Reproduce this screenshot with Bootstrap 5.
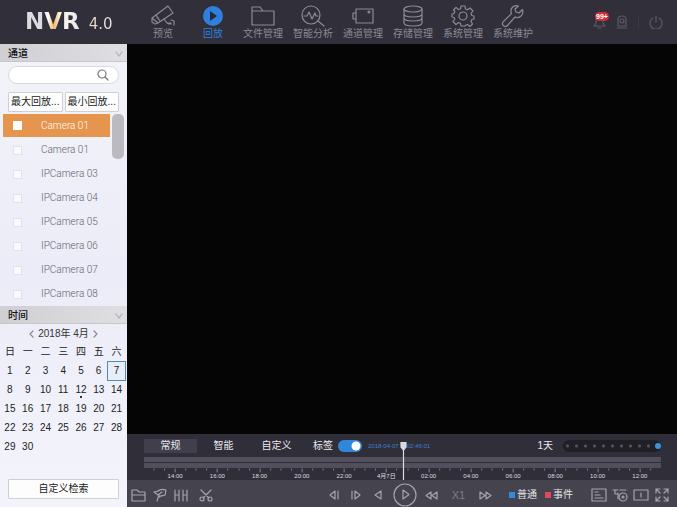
<!DOCTYPE html>
<html lang="zh-CN">
<head>
<meta charset="utf-8">
<meta name="viewport" content="width=device-width, initial-scale=1">
<title>NVR 4.0</title>
<link href="https://cdn.jsdelivr.net/npm/bootstrap@5.3.0/dist/css/bootstrap.min.css" rel="stylesheet">
<style>
body{font-family:"Liberation Sans","Noto Sans CJK SC",sans-serif;font-size:10px;line-height:14px;background:#050505;color:#222}
svg{display:block;flex:none;fill:none;stroke:currentColor;stroke-width:1.2;stroke-linecap:round;stroke-linejoin:round}
button{font:inherit;line-height:14px;color:inherit;background:none;border:0;padding:0}
.topbar{height:44px;background:#312f39;color:#8b8a98}
.brand{width:138px;padding-left:25px;padding-top:5px;gap:9px;font-family:"DejaVu Sans",sans-serif}
.brand-name{font-size:23px;line-height:32px;font-weight:700;background:linear-gradient(90deg,#dcdbe0 0 34%,#fff 42%,#f0b565 52%,#fdf6ec 64%,#e6e5ea);-webkit-background-clip:text;background-clip:text;color:transparent}
.brand-ver{font-size:15px;line-height:32px;background:linear-gradient(90deg,#e9d7bd,#e6e5ea);-webkit-background-clip:text;background-clip:text;color:transparent}
.topnav a{width:50px;padding-top:5px;color:#8b8a98;text-decoration:none;white-space:nowrap}
.topnav a.active{color:#2f7fdc}
.topnav svg{width:24px;height:22px}
.tools{color:#5c5b66;gap:10px;padding-right:14px}
.tools .vr{height:14px}
.alarm-count{top:-3px;left:2px;font-size:7px;line-height:9px;font-weight:700;background:#cf2f3a;color:#fff;border-radius:5px;padding:0 1px}
.side{width:127px;flex:none;background:linear-gradient(#f3f3fa,#ececf8 50%,#f3f4fb)}
.side-head{height:18px;padding:2px 3px 0 8px;background:linear-gradient(90deg,#d0d0d4,#dedee3);border-bottom:1px solid #c6c6cc;font-weight:500;color:#111}
.side-head svg{color:#aeb2b8}
.search{margin:4px 8px 8px;height:18px;border:1px solid #d9d9de;border-radius:9px;background:#fff;padding:0 9px;color:#777}
.search input{min-width:0;border:0;outline:0;background:none;font-size:10px;height:14px;padding:0}
.btn-pair{gap:2px}
.box-btn{height:20px;background:#fdfdfe;border:1px solid #cfcfd5;border-radius:1px;color:#222}
.cams{height:194px;padding:2px 3px 0 3px;gap:2px}
.cam{height:24px;padding-left:10px;color:#62626b;font-family:Roboto,"Liberation Sans",sans-serif;font-weight:300}
.cam.on{background:#e6954f;color:#fff;height:23px;margin-bottom:1px}
.cam input{appearance:none;width:9px;height:9px;margin:0 19px 0 0;background:#fafafd;border:1px solid #e1e1e7}
.cam.on input{background:#fff;border-color:#fff}
.scroll-thumb{width:12px;height:45px;border-radius:5px;background:#babac0;flex:none}
.cal{margin:1px 1px 0;width:125px;table-layout:fixed;border-collapse:collapse;text-align:center;color:#222}
.cal th{font-weight:400;height:18px;padding:0}
.cal td{height:19px;padding:0;line-height:14px}
.cal .today{border:1px solid #5289b5;background:#e8eef8}
.cal .dotted{background:radial-gradient(circle at 50% 17px,#333 0 1px,transparent 1px)}
.month{padding-top:2px;color:#333;height:18px}
.month button{color:#888}
.video{background:#050505}
.panel{background:#302f39;padding:5px 16px 0 17px;color:#e9e9ee}
.tab-btn{width:53px;height:14px}
.tab-btn.active{background:#413f4b}
.tag-label{margin-left:10px}
.form-switch{padding:0;margin:0 6px 0 5px;min-height:0}
.form-switch .form-check-input{width:24px;height:12px;margin:0;float:none;display:block;border:0;box-shadow:none;background-color:#2f86dc}
.stamp{font-size:6px;color:#3e7fd0;gap:8px}
.zoom-range{appearance:none;width:98px;height:12px;border-radius:6px;margin:0 0 0 10px;background:radial-gradient(circle,#54535e 0 1px,transparent 2px) 0 0/9px 12px,#201f26}
.zoom-range::-webkit-slider-thumb{appearance:none;width:6px;height:6px;border-radius:50%;background:#3c93dc;margin-right:4px}
.track{height:5px;background:#514f5c;margin-bottom:1px}
.scale-row{padding-left:10px;font-size:6px;line-height:8px;color:#dcdce2;margin-top:1px}
.scale-row span{width:100%;text-align:center}
.scale-row svg{width:100%;height:3px;stroke:#85848f;stroke-width:1;overflow:visible}
.playhead{left:50%;top:3px;width:7px;height:38px;margin-left:-3px;color:#dadae0}
.controls{height:27px;background:#45444e;color:#a2a3ad;padding:3px 7px 0 4px}
.controls svg{width:16px;height:16px}
.file-tools{gap:5px}
.play-tools button{width:22px}
.play-tools .wide{width:32px}
.play-tools .wide svg{width:24px;height:24px}
.rate{width:23px;color:#7c7c87;font-size:11px}
.legend{gap:8px;margin:0 18px 0 13px}
.legend-item{gap:2px;color:#e6e6eb}
.swatch{width:6px;height:6px;background:#2f8be0}
.swatch.event{background:#e04a58}
.view-tools{gap:5px}
</style>
<script src="https://cdn.jsdelivr.net/npm/bootstrap@5.3.0/dist/js/bootstrap.bundle.min.js"></script>
</head>
<body class="d-flex flex-column min-vh-100">
<header class="topbar d-flex">
  <div class="brand d-flex align-items-baseline"><span class="brand-name">NVR</span><span class="brand-ver">4.0</span></div>
  <nav class="topnav d-flex flex-grow-1" aria-label="主菜单">
    <a href="#" class="d-flex flex-column align-items-center"><svg viewBox="0 0 24 22"><path d="M1 13 17 1 22 8 7 18zM5 10l4 6M1 13v4l3 2 3-1M13 14l3 4h4M20 15l3 1v4M16 18l2 1h2"/><path d="M6 13h1"/></svg>预览</a>
    <a href="#" class="active d-flex flex-column align-items-center" aria-current="page"><svg viewBox="0 0 24 22"><circle cx="12" cy="11" r="10" fill="currentColor" stroke="none"/><path d="m9 6 7 5-7 5z" fill="#232a3c" stroke="none"/></svg>回放</a>
    <a href="#" class="d-flex flex-column align-items-center"><svg viewBox="0 0 24 22"><path d="M1 20V2h8l3 4h11v14zM1 6h11"/></svg>文件管理</a>
    <a href="#" class="d-flex flex-column align-items-center"><svg viewBox="0 0 24 22"><circle cx="10" cy="10" r="9"/><path d="m17 16 6 5M3 11h3l2-4 3 7 3-6 1 3h2"/></svg>智能分析</a>
    <a href="#" class="d-flex flex-column align-items-center"><svg viewBox="0 0 24 22"><path d="M5 4h17v14H5v-4H2V8h3zM5 8v6"/><circle cx="18" cy="7" r="1"/></svg>通道管理</a>
    <a href="#" class="d-flex flex-column align-items-center"><svg viewBox="0 0 24 22"><ellipse cx="12" cy="4" rx="9" ry="3"/><path d="M3 4v14c0 4 18 4 18 0V4M3 9c0 4 18 4 18 0M3 13c0 4 18 4 18 0"/></svg>存储管理</a>
    <a href="#" class="d-flex flex-column align-items-center"><svg viewBox="0 0 24 22"><circle cx="12" cy="11" r="4"/><path d="M10 1h4l.5 3 2 .8L19 3l3 3-2 2.500.8 2 2.200.5v3l-2.200.5-.8 2 1.500 2.500-2.500 2.500-2.500-2-2 .8L14 21h-4l-.5-2.700-2-.8L5 19.500 2 16.500 3.800 14 3 12.500 1 12V9l2-.5.8-2L2.500 5 5 2.500 7.500 4.500l2-.5z"/></svg>系统管理</a>
    <a href="#" class="d-flex flex-column align-items-center"><svg viewBox="0 0 24 22"><path d="M21.500 4.500 18 8l-3-1-1-3 3.500-3C12-.5 8.500 4 10.500 8.500L2 17c-2 3 2 6 4.500 3.500L14 12c5 2 9-2.500 7.500-7.500z"/></svg>系统维护</a>
  </nav>
  <div class="tools d-flex align-items-center">
    <button class="position-relative" aria-label="报警"><svg width="13" height="14" viewBox="0 0 13 14"><path d="M1 11h11l-2-3V5c0-5-7-5-7 0v3zM5 13h3"/></svg><span class="alarm-count position-absolute">99+</span></button>
    <button aria-label="录像状态"><svg width="12" height="14" viewBox="0 0 12 14"><path d="M2 11V4c0-4 8-4 8 0v7zM1 13h10"/><circle cx="6" cy="6" r="2"/></svg></button>
    <div class="vr my-auto"></div>
    <button aria-label="电源"><svg width="14" height="14" viewBox="0 0 14 14"><path d="M4 3a6 6 0 1 0 6 0M7 1v6"/></svg></button>
  </div>
</header>
<div class="d-flex flex-grow-1">
  <aside class="side d-flex flex-column">
    <div class="side-head d-flex align-items-center justify-content-between"><span>通道</span><svg width="10" height="6" viewBox="0 0 10 6"><path d="m2 1 3 4 3-4"/></svg></div>
    <label class="search d-flex align-items-center"><input type="search" class="w-100" aria-label="搜索通道"><svg width="12" height="12" viewBox="0 0 12 12"><circle cx="5" cy="5" r="4"/><path d="m8 8 3 3"/></svg></label>
    <div class="btn-pair d-flex px-2"><button class="box-btn w-50">最大回放...</button><button class="box-btn w-50">最小回放...</button></div>
    <div class="cams d-flex">
      <div id="cams" class="flex-grow-1"></div>
      <div class="scroll-thumb"></div>
    </div>
    <div class="side-head d-flex align-items-center justify-content-between"><span>时间</span><svg width="10" height="6" viewBox="0 0 10 6"><path d="m2 1 3 4 3-4"/></svg></div>
    <div class="month d-flex align-items-center justify-content-center gap-1"><button aria-label="上个月"><svg width="5" height="8" viewBox="0 0 5 8"><path d="M4 1 1 4l3 3"/></svg></button><span>2018年 4月</span><button aria-label="下个月"><svg width="5" height="8" viewBox="0 0 5 8"><path d="m1 1 3 3-3 3"/></svg></button></div>
    <table class="cal"><thead><tr><th>日</th><th>一</th><th>二</th><th>三</th><th>四</th><th>五</th><th>六</th></tr></thead><tbody id="days"></tbody></table>
    <button class="box-btn mx-2 mb-2 mt-auto">自定义检索</button>
  </aside>
  <main class="d-flex flex-column flex-grow-1">
    <div class="video flex-grow-1"></div>
    <section class="panel">
      <div class="position-relative">
        <div class="d-flex align-items-center">
          <button class="tab-btn active">常规</button>
          <button class="tab-btn">智能</button>
          <button class="tab-btn">自定义</button>
          <label for="tags" class="tag-label">标签</label>
          <div class="form-check form-switch"><input id="tags" class="form-check-input" type="checkbox" role="switch" checked></div>
          <div class="stamp d-flex"><span>2018-04-07</span><span>02:46:01</span></div>
          <label for="zoom" class="ms-auto">1天</label>
          <input id="zoom" class="zoom-range" type="range" min="0" max="10" value="10">
        </div>
        <div class="track mt-1"></div><div class="track"></div>
        <div id="scale" class="scale-row d-flex"></div>
        <svg class="playhead position-absolute" viewBox="0 0 7 38"><path d="M1 0h5v5L3.500 8 1 5z" fill="currentColor"/><path d="M3.500 7v31"/></svg>
      </div>
    </section>
    <div class="controls d-flex align-items-center">
      <div class="file-tools d-flex flex-grow-1">
        <button aria-label="文件"><svg viewBox="0 0 16 16"><path d="M1 14V3h5l2 2h6v9zM1 8h13"/></svg></button>
        <button aria-label="标签"><svg viewBox="0 0 16 16"><path d="M2 5c2-1 3 0 4-1 2-2 5-2 8-1-1 2 0 3-1 5-2 1-4 0-6 2M2 5l4 3 4-3M7 8l-2 6"/></svg></button>
        <button aria-label="分段"><svg viewBox="0 0 16 16"><path d="M2 3v11M6 3v11M10 3v11M14 3v11M2 8h4M10 8h4"/></svg></button>
        <button class="ms-1" aria-label="剪辑"><svg viewBox="0 0 16 16"><circle cx="4" cy="12" r="2"/><circle cx="12" cy="12" r="2"/><path d="m3 3 8 8M13 3l-8 8"/></svg></button>
      </div>
      <div class="play-tools d-flex align-items-center">
        <button aria-label="后退一帧"><svg class="mx-auto" viewBox="0 0 16 16"><path d="M9 4v8L4 8zM12 4v8"/></svg></button>
        <button aria-label="前进一帧"><svg class="mx-auto" viewBox="0 0 16 16"><path d="M7 4v8l5-4zM4 4v8"/></svg></button>
        <button aria-label="倒放"><svg class="mx-auto" viewBox="0 0 16 16"><path d="M11 4v8L5 8z"/></svg></button>
        <button class="wide" aria-label="播放"><svg class="mx-auto" viewBox="0 0 24 24"><circle cx="12" cy="12" r="11"/><path d="M10 7v9l6-4.500z"/></svg></button>
        <button aria-label="减速"><svg class="mx-auto" viewBox="0 0 16 16"><path d="M7 5v7L2 8.500zM13 5v7L8 8.500z"/></svg></button>
        <span class="rate text-center mx-1">X1</span>
        <button aria-label="加速"><svg class="mx-auto" viewBox="0 0 16 16"><path d="M3 5v7l5-3.500zM9 5v7l5-3.500z"/></svg></button>
      </div>
      <div class="legend d-flex align-items-center">
        <span class="legend-item d-flex align-items-center"><i class="swatch"></i>普通</span>
        <span class="legend-item d-flex align-items-center"><i class="swatch event"></i>事件</span>
      </div>
      <div class="view-tools d-flex">
        <button aria-label="列表"><svg viewBox="0 0 16 16"><path d="M1 2h14v12H1zM4 5h3M4 8h5M4 11h8"/></svg></button>
        <button aria-label="播放策略"><svg viewBox="0 0 16 16"><path d="M1 3h5M3 3v4h3M8 3h6M6 6v6"/><circle cx="11" cy="10" r="4"/><circle cx="11" cy="10" r="1"/></svg></button>
        <button aria-label="分屏"><svg viewBox="0 0 16 16"><path d="M1 3h14v10H1zM8 6v4"/></svg></button>
        <button aria-label="全屏"><svg viewBox="0 0 16 16"><path d="M2 6V2h4M2 2l4 4M10 2h4v4M14 2l-4 4M2 10v4h4M2 14l4-4M14 10v4h-4M14 14l-4-4"/></svg></button>
      </div>
    </div>
  </main>
</div>
<script>
const names=['Camera 01','Camera 01','IPCamera 03','IPCamera 04','IPCamera 05','IPCamera 06','IPCamera 07','IPCamera 08'];
document.getElementById('cams').innerHTML=names.map((n,i)=>`<label class="cam d-flex align-items-center${i?'':' on'}"><input type="checkbox">${n}</label>`).join('');
let rows='';
for(let w=0;w<5;w++){
  rows+='<tr>';
  for(let d=1;d<=7;d++){
    const n=w*7+d;
    rows+=`<td class="${n===7?'today':n===12?'dotted':''}">${n<=30?n:''}</td>`;
  }
  rows+='</tr>';
}
document.getElementById('days').innerHTML=rows;
const hours=['14:00','16:00','18:00','20:00','22:00','4月7日','02:00','04:00','06:00','08:00','10:00','12:00'];
document.getElementById('scale').innerHTML=hours.map(h=>`<span><svg><line x1="0" x2="0" y2="1"/><line x1="25%" x2="25%" y2="1"/><line x1="50%" x2="50%" y2="3"/><line x1="75%" x2="75%" y2="1"/></svg>${h}</span>`).join('');
</script>
</body>
</html>
